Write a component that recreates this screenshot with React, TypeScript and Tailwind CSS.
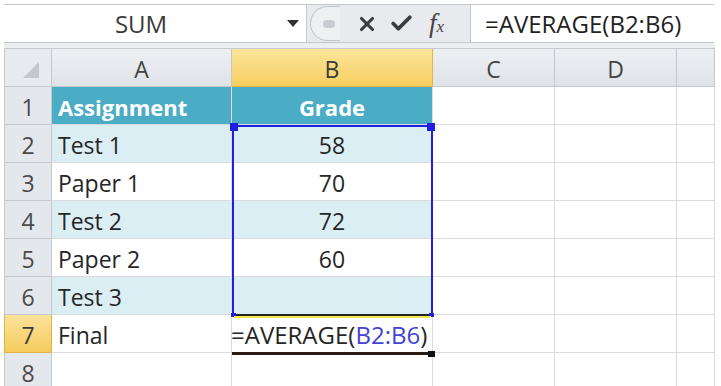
import { X, Check } from "lucide-react";

const rows = [
  { n: 1, a: "Assignment", b: "Grade", head: true },
  { n: 2, a: "Test 1", b: "58", band: true },
  { n: 3, a: "Paper 1", b: "70" },
  { n: 4, a: "Test 2", b: "72", band: true },
  { n: 5, a: "Paper 2", b: "60" },
  { n: 6, a: "Test 3", b: "", band: true },
  { n: 7, a: "Final", b: "" },
  { n: 8, a: "", b: "" },
];

const cell = "h-[38px] border-r border-b border-[#d9dbde] flex items-center pt-[3px]";

function FormulaBar() {
  return (
    <div className="flex h-[39px] mt-[4px] ml-[4px] w-[710px] border-t border-b border-[#c3c7cd] bg-white">
      {/* name box */}
      <div className="w-[302px] flex items-center relative">
        <span className="flex-1 text-center pr-[28px] text-[24px] text-[#3a3a3a]">SUM</span>
        <span className="absolute left-[283px] top-[15px] w-0 h-0 border-l-[6px] border-r-[6px] border-t-[7px] border-l-transparent border-r-transparent border-t-[#333]" />
      </div>
      {/* buttons */}
      <div className="w-[164px] bg-[#e8eaed] flex items-center border-l border-[#c9ccd1]">
        <div className="ml-[3px] h-[35px] w-[30px] rounded-l-full border border-r-0 border-[#c2c6cc] bg-[#eef0f2] flex items-center justify-center">
          <div className="w-[12px] h-[8px] rounded-full bg-[#c9ccd1] ml-[6px]" />
        </div>
        <X size={22} strokeWidth={3.4} className="ml-[16px] text-[#3c3c3c]" />
        <Check size={25} strokeWidth={3.6} className="ml-[11px] text-[#3c3c3c]" />
        <span className="ml-[15px] italic text-[#444] text-[27px] leading-none" style={{ fontFamily: '"Liberation Serif", serif' }}>
          f<span className="text-[17px]">x</span>
        </span>
      </div>
      {/* formula */}
      <div className="flex-1 flex items-center border-l border-[#c3c7cd] pl-[14px] text-[24px] text-[#222]">
        =AVERAGE(B2:B6)
      </div>
    </div>
  );
}

function ColHeader({ label, sel }: { label: string; sel?: boolean }) {
  return (
    <div
      className={
        "h-[38px] border-r border-b flex items-center justify-center pt-[3px] text-[23px] " +
        (sel
          ? "bg-gradient-to-b from-[#fbe49a] to-[#f6cf5f] border-[#e5b443] text-[#3b3b3b]"
          : "bg-gradient-to-b from-[#edf0f3] to-[#dfe3e8] border-[#c5c9cf] text-[#444]")
      }
    >
      {label}
    </div>
  );
}

export default function App() {
  return (
    <div className="w-[721px] h-[386px] bg-white overflow-hidden" style={{ fontFamily: '"Open Sans", sans-serif' }}>
      <FormulaBar />
      <div className="h-[6px] ml-[4px] w-[711px] bg-[#eceef1] border-b border-[#c5c9cf]" />
      <div className="relative ml-[4px] w-[711px]">
        <div className="grid grid-cols-[48px_180px_201px_122px_122px_38px]">
          <div className="h-[38px] border-r border-b border-l border-[#c5c9cf] bg-[#e7eaee] relative">
            <svg width="20" height="20" className="absolute right-[10px] bottom-[6px]" viewBox="0 0 20 20">
              <polygon points="18,2 18,18 2,18" fill="#c4c8cd" />
            </svg>
          </div>
          <ColHeader label="A" />
          <ColHeader label="B" sel />
          <ColHeader label="C" />
          <ColHeader label="D" />
          <ColHeader label="" />

          {rows.map((r) => (
            <div key={r.n} className="contents">
              <div
                className={
                  "h-[38px] border-r border-b border-l flex items-center justify-center pt-[3px] text-[23px] " +
                  (r.n === 7
                    ? "bg-gradient-to-b from-[#fbe29a] to-[#f5cc5c] border-[#e2b346] text-[#3b3b3b]"
                    : "bg-[#e4e7eb] border-[#c5c9cf] text-[#4a4a4a]")
                }
              >
                {r.n}
              </div>
              <div
                className={
                  cell +
                  " pl-[6px] " +
                  (r.head
                    ? "bg-[#4bacc6] text-white font-bold text-[22px] border-[#4bacc6]"
                    : r.band
                    ? "bg-[#dbeef4] text-[#262626] text-[23px] border-[#bcdce6]"
                    : "text-[#262626] text-[23px] border-[#bcdce6]") +
                  (r.n >= 7 ? " !border-b-[#d9dbde]" : "")
                }
              >
                {r.a}
              </div>
              <div
                className={
                  cell +
                  " justify-center " +
                  (r.head
                    ? "bg-[#4bacc6] text-white font-bold text-[22px] border-[#4bacc6]"
                    : r.band
                    ? "bg-[#dbeef4] text-[#262626] text-[23px] border-[#bcdce6]"
                    : "text-[#262626] text-[23px] border-[#bcdce6]") +
                  (r.n >= 7 ? " !border-b-[#d9dbde] !justify-start overflow-visible whitespace-nowrap" : "")
                }
              >
                {r.n === 7 ? (
                  <span className="relative z-10 -ml-[1px] text-[24px]">
                    =AVERAGE(<span className="text-[#4343d6]">B2:B6</span>)
                  </span>
                ) : (
                  r.b
                )}
              </div>
              <div className={cell} />
              <div className={cell} />
              <div className={cell} />
            </div>
          ))}
        </div>

        {/* selection B2:B6 */}
        <div className="absolute left-[228px] top-[76px] w-[201px] h-[191px] border-2 border-[#1f1fe0] border-b-[#222]">
          <div className="absolute -left-[4px] -top-[4px] w-[8px] h-[8px] bg-[#1f1fe0]" />
          <div className="absolute -right-[4px] -top-[4px] w-[8px] h-[8px] bg-[#1f1fe0]" />
          <div className="absolute -left-[3px] -bottom-[3px] w-[5px] h-[4px] bg-[#1f1fe0]" />
          <div className="absolute -right-[3px] -bottom-[3px] w-[5px] h-[4px] bg-[#1f1fe0]" />
          <div className="absolute left-0 right-0 -bottom-[4px] h-[2px] bg-[#f2e94a]" />
        </div>
        {/* active cell underline B7 */}
        <div className="absolute left-[228px] top-[303px] w-[198px] h-[3px] bg-[#2a1c14]" />
        <div className="absolute left-[424px] top-[302px] w-[7px] h-[6px] bg-[#111]" />
      </div>
    </div>
  );
}
